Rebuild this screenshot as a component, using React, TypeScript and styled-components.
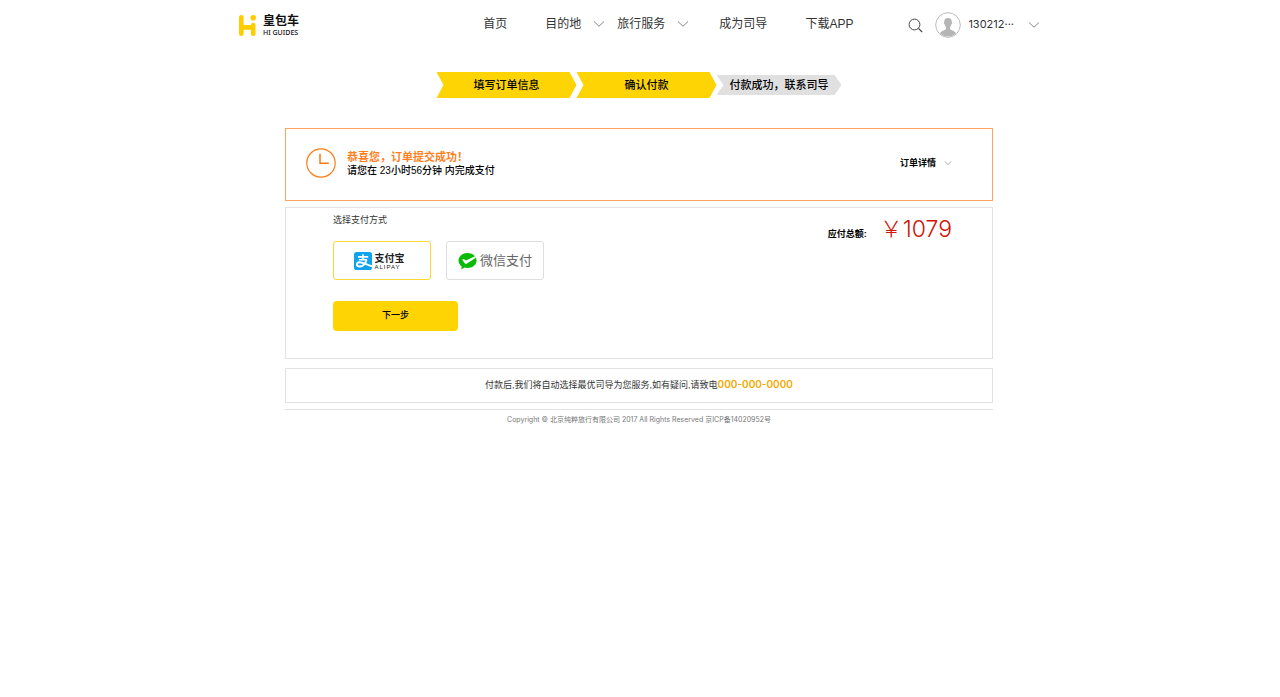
import React, { useState } from 'react';
import styled, { createGlobalStyle } from 'styled-components';

const cjk = `"Noto Sans CJK SC", sans-serif`;

const GlobalStyle = createGlobalStyle`
  *, *::before, *::after { box-sizing: border-box; }
  body {
    margin: 0;
    padding-right: 2px;
    background: #fff;
    color: #000;
    font-family: "Liberation Sans", ${cjk};
    font-size: 9px;
    line-height: 14px;
  }
  a { color: inherit; text-decoration: none; }
  button { font: inherit; color: inherit; border: 0; padding: 0; background: none; cursor: pointer; }
`;

const Header = styled.header`
  display: flex;
  align-items: center;
  width: 100%;
  max-width: 802px;
  height: 50px;
  margin: 0 auto;
`;

const Logo = styled.a`
  display: flex;
  align-items: center;
  gap: 6px;
  margin-right: auto;
`;

const LogoName = styled.span`
  display: block;
  color: #111;
  font: 700 12px/15px ${cjk};
`;

const LogoSub = styled.span`
  display: block;
  color: #111;
  font: 500 7px/11px "Noto Sans", sans-serif;
`;

const Nav = styled.nav`
  display: flex;
  align-items: center;
  margin-right: 55px;
  color: #333;
  font: 400 12px/16px "Liberation Sans", ${cjk};
`;

const NavLink = styled.a<{ $after: number }>`
  display: flex;
  align-items: center;
  gap: 12px;
  margin-right: ${({ $after }) => $after}px;
  padding-bottom: 2px;
  white-space: nowrap;
`;

const Account = styled.div`
  display: flex;
  align-items: center;
  gap: 12px;
`;

const UserButton = styled.button`
  display: flex;
  align-items: center;
  gap: 7px;
  color: #333;
  font: 400 11px/14px "Inter", ${cjk};

  & > svg:last-child { margin-left: 7px; }
`;

const UserName = styled.span`
  padding-bottom: 2px;
`;

const IconButton = styled.button`
  display: flex;
`;

const Steps = styled.ol`
  display: flex;
  justify-content: center;
  align-items: center;
  margin: 22px 0 30px;
  padding: 0;
  list-style: none;
`;

const Step = styled.li<{ $reached?: boolean }>`
  display: flex;
  justify-content: center;
  align-items: center;
  width: ${({ $reached }) => ($reached ? 140 : 125)}px;
  height: ${({ $reached }) => ($reached ? 26 : 20)}px;
  padding-bottom: 3px;
  background: ${({ $reached }) => ($reached ? '#ffd405' : '#e0e0e0')};
  clip-path: polygon(0 0, calc(100% - 7px) 0, 100% 50%, calc(100% - 7px) 100%, 0 100%, 7px 50%);
  font: 500 11px/16px ${cjk};
  white-space: nowrap;
`;

const Page = styled.main`
  width: 100%;
  max-width: 708px;
  margin: 0 auto;
`;

const Confirmation = styled.section`
  display: flex;
  align-items: center;
  gap: 11px;
  padding: 19px 40px 22px 20px;
  border: 1px solid #ffa35c;
`;

const ConfirmationText = styled.div`
  flex: 1;
`;

const Title = styled.h1`
  margin: 0;
  color: #ff7f1e;
  font: 700 11px/16px ${cjk};
`;

const Deadline = styled.p`
  margin: 0;
  font-size: 10px;
  font-weight: 500;
`;

const DetailsButton = styled.button`
  display: flex;
  align-items: center;
  gap: 8px;
  font-weight: 700;
`;

const Payment = styled.section`
  display: flex;
  justify-content: space-between;
  align-items: flex-start;
  margin-top: 6px;
  padding: 5px 40px 27px 47px;
  border: 1px solid #e2e2e2;
`;

const Methods = styled.fieldset`
  display: flex;
  gap: 15px;
  margin: 0 0 21px;
  padding: 0;
  border: 0;
`;

const Legend = styled.legend`
  margin-bottom: 14px;
  padding: 0;
  color: #333;
`;

const Method = styled.label`
  display: flex;
  justify-content: center;
  align-items: center;
  gap: 3px;
  width: 98px;
  height: 39px;
  border: 1px solid #dedede;
  border-radius: 3px;
  cursor: pointer;

  &:has(input:checked) { border-color: #fdd835; }
  &:has(input:focus-visible) { outline: 2px solid #fdd835; }
`;

const Radio = styled.input`
  appearance: none;
  position: absolute;
  margin: 0;
`;

const AlipayLabel = styled.span`
  width: 36px;
`;

const AlipayName = styled.span`
  display: block;
  color: #222;
  font: 700 10px/12px ${cjk};
`;

const AlipaySub = styled.span`
  display: block;
  color: #222;
  font: 400 6px/6px "Liberation Sans", sans-serif;
  letter-spacing: 1px;
`;

const WechatName = styled.span`
  padding-bottom: 2px;
  color: #666;
  font: 400 13px/18px ${cjk};
`;

const NextButton = styled.button`
  width: 125px;
  height: 30px;
  border-radius: 4px;
  padding-bottom: 2px;
  background: #ffd405;
  font-weight: 500;
`;

const Total = styled.p`
  display: flex;
  align-items: baseline;
  gap: 13px;
  margin: 3px 0 0;
  font-weight: 700;
`;

const Amount = styled.strong`
  color: #cf1508;
  font: 300 23px/26px "Inter", ${cjk};
`;

const Notice = styled.p`
  margin: 9px 0 6px;
  padding: 8px 0 10px;
  border: 1px solid #e2e2e2;
  color: #333;
  text-align: center;
`;

const Phone = styled.a`
  color: #f5a800;
  font-family: "Inter", sans-serif;
  font-size: 10px;
  font-weight: 600;
`;

const Footer = styled.footer`
  padding-top: 3px;
  border-top: 1px solid #e2e2e2;
  color: #777;
  font-family: "Inter", ${cjk};
  font-size: 7px;
  text-align: center;
`;

const Chevron = ({ size = 12, color = '#888' }: { size?: number; color?: string }) => (
  <svg width={size} height={size / 2} viewBox="0 0 12 6" fill="none" stroke={color} aria-hidden="true">
    <path d="M1 .5 6 5.2 11 .5" />
  </svg>
);

const LogoMark = () => (
  <svg width="19" height="23" viewBox="0 0 19 23" fill="none" stroke="#fc0" strokeWidth="4.6" strokeLinecap="round" aria-hidden="true">
    <path d="M3.300 3.300v16.400M15.200 11v8.700M4 13.400h11" />
    <circle cx="15.2" cy="3.700" r="2.800" fill="#fc0" stroke="none" />
  </svg>
);

const SearchIcon = () => (
  <svg width="15" height="15" viewBox="0 0 15 15" fill="none" stroke="#444" aria-hidden="true">
    <circle cx="6.500" cy="6.500" r="5.400" />
    <path d="m10.400 10.400 3.800 3.600" strokeWidth="1.200" />
  </svg>
);

const Avatar = () => (
  <svg width="26" height="26" viewBox="0 0 26 26" aria-hidden="true">
    <circle cx="13" cy="13" r="12.300" fill="#fff" stroke="#bbb" />
    <path
      d="M13 6c2.500 0 3.900 1.600 3.800 4 .6.300.3 1.900-.4 2.200-.2 1.200-.6 2-1.300 2.700v2c.8 1.500 4.800 1.600 5.900 4.400A11.500 11.500 0 0 1 13 24.600a11.500 11.500 0 0 1-8-3.300c1.100-2.800 5.100-2.900 5.900-4.400v-2c-.7-.7-1.100-1.500-1.300-2.700-.7-.3-1-1.900-.4-2.200C9.100 7.600 10.500 6 13 6Z"
      fill="#b5b5b5"
    />
  </svg>
);

const ClockIcon = () => (
  <svg width="30" height="30" viewBox="0 0 30 30" fill="none" stroke="#ff7a0d" aria-hidden="true">
    <circle cx="15" cy="15" r="14.200" strokeWidth="1.200" />
    <path d="M14 5.800v9.500h8.800" strokeWidth="1.500" />
  </svg>
);

const AlipayIcon = () => (
  <svg width="18" height="18" viewBox="0 0 18 18" fill="none" stroke="#fff" aria-hidden="true">
    <rect width="18" height="18" rx="2.600" fill="#0fa3ee" stroke="none" />
    <path d="M9 2.300v5.400M4 4.900h10.200M4.900 7.700h8" strokeWidth="1.600" />
    <path d="M12.600 7.600c-.9 3.500-3.200 6.900-6.700 6.900-4 0-4-4.200-.4-4.200 3.300 0 6.300 2 12.500 4" strokeWidth="1.900" />
  </svg>
);

const WechatIcon = () => (
  <svg width="19" height="18" viewBox="0 0 19 18" aria-hidden="true">
    <path d="M9.500 1C14.700 1 18.600 4.300 18.600 8.500s-3.900 7.500-9.100 7.500c-1.100 0-2.100-.1-3-.4L3.300 17.400l.4-3C1.700 13.100.5 10.900.5 8.500.5 4.300 4.400 1 9.500 1Z" fill="#09bb07" />
    <path d="M4.600 7.300c.5-.4 1-.3 1.500 0l1.900 1.200 8.900-4.300 1 1.500-9.300 6c-.6.4-1.200.3-1.600-.2L4.500 8.300Z" fill="#fff" />
  </svg>
);

export default function App() {
  const [method, setMethod] = useState('alipay');
  const pick = (e: React.ChangeEvent<HTMLInputElement>) => setMethod(e.target.value);

  return (
    <>
      <GlobalStyle />
      <Header>
        <Logo href="#">
          <LogoMark />
          <span>
            <LogoName>皇包车</LogoName>
            <LogoSub>HI GUIDES</LogoSub>
          </span>
        </Logo>
        <Nav>
          <NavLink href="#" $after={38}>首页</NavLink>
          <NavLink href="#" $after={12}>目的地<Chevron /></NavLink>
          <NavLink href="#" $after={30}>旅行服务<Chevron /></NavLink>
          <NavLink href="#" $after={38}>成为司导</NavLink>
          <NavLink href="#" $after={0}>下载APP</NavLink>
        </Nav>
        <Account>
          <IconButton type="button" aria-label="搜索"><SearchIcon /></IconButton>
          <UserButton type="button">
            <Avatar />
            <UserName>130212···</UserName>
            <Chevron />
          </UserButton>
        </Account>
      </Header>

      <Page>
        <Steps>
          <Step $reached>填写订单信息</Step>
          <Step $reached>确认付款</Step>
          <Step>付款成功，联系司导</Step>
        </Steps>

        <Confirmation>
          <ClockIcon />
          <ConfirmationText>
            <Title>恭喜您，订单提交成功！</Title>
            <Deadline>请您在 23小时56分钟 内完成支付</Deadline>
          </ConfirmationText>
          <DetailsButton type="button">
            订单详情
            <Chevron size={8} />
          </DetailsButton>
        </Confirmation>

        <Payment>
          <form onSubmit={(e) => e.preventDefault()}>
            <Methods>
              <Legend>选择支付方式</Legend>
              <Method>
                <Radio type="radio" name="method" value="alipay" checked={method === 'alipay'} onChange={pick} />
                <AlipayIcon />
                <AlipayLabel>
                  <AlipayName>支付宝</AlipayName>
                  <AlipaySub>ALIPAY</AlipaySub>
                </AlipayLabel>
              </Method>
              <Method>
                <Radio type="radio" name="method" value="wechat" checked={method === 'wechat'} onChange={pick} />
                <WechatIcon />
                <WechatName>微信支付</WechatName>
              </Method>
            </Methods>
            <NextButton type="submit">下一步</NextButton>
          </form>
          <Total>
            应付总额:
            <Amount>￥1079</Amount>
          </Total>
        </Payment>

        <Notice>
          付款后,我们将自动选择最优司导为您服务,如有疑问,请致电<Phone href="tel:000-000-0000">000-000-0000</Phone>
        </Notice>

        <Footer>Copyright © 北京纯粹旅行有限公司 2017 All Rights Reserved 京ICP备14020952号</Footer>
      </Page>
    </>
  );
}
